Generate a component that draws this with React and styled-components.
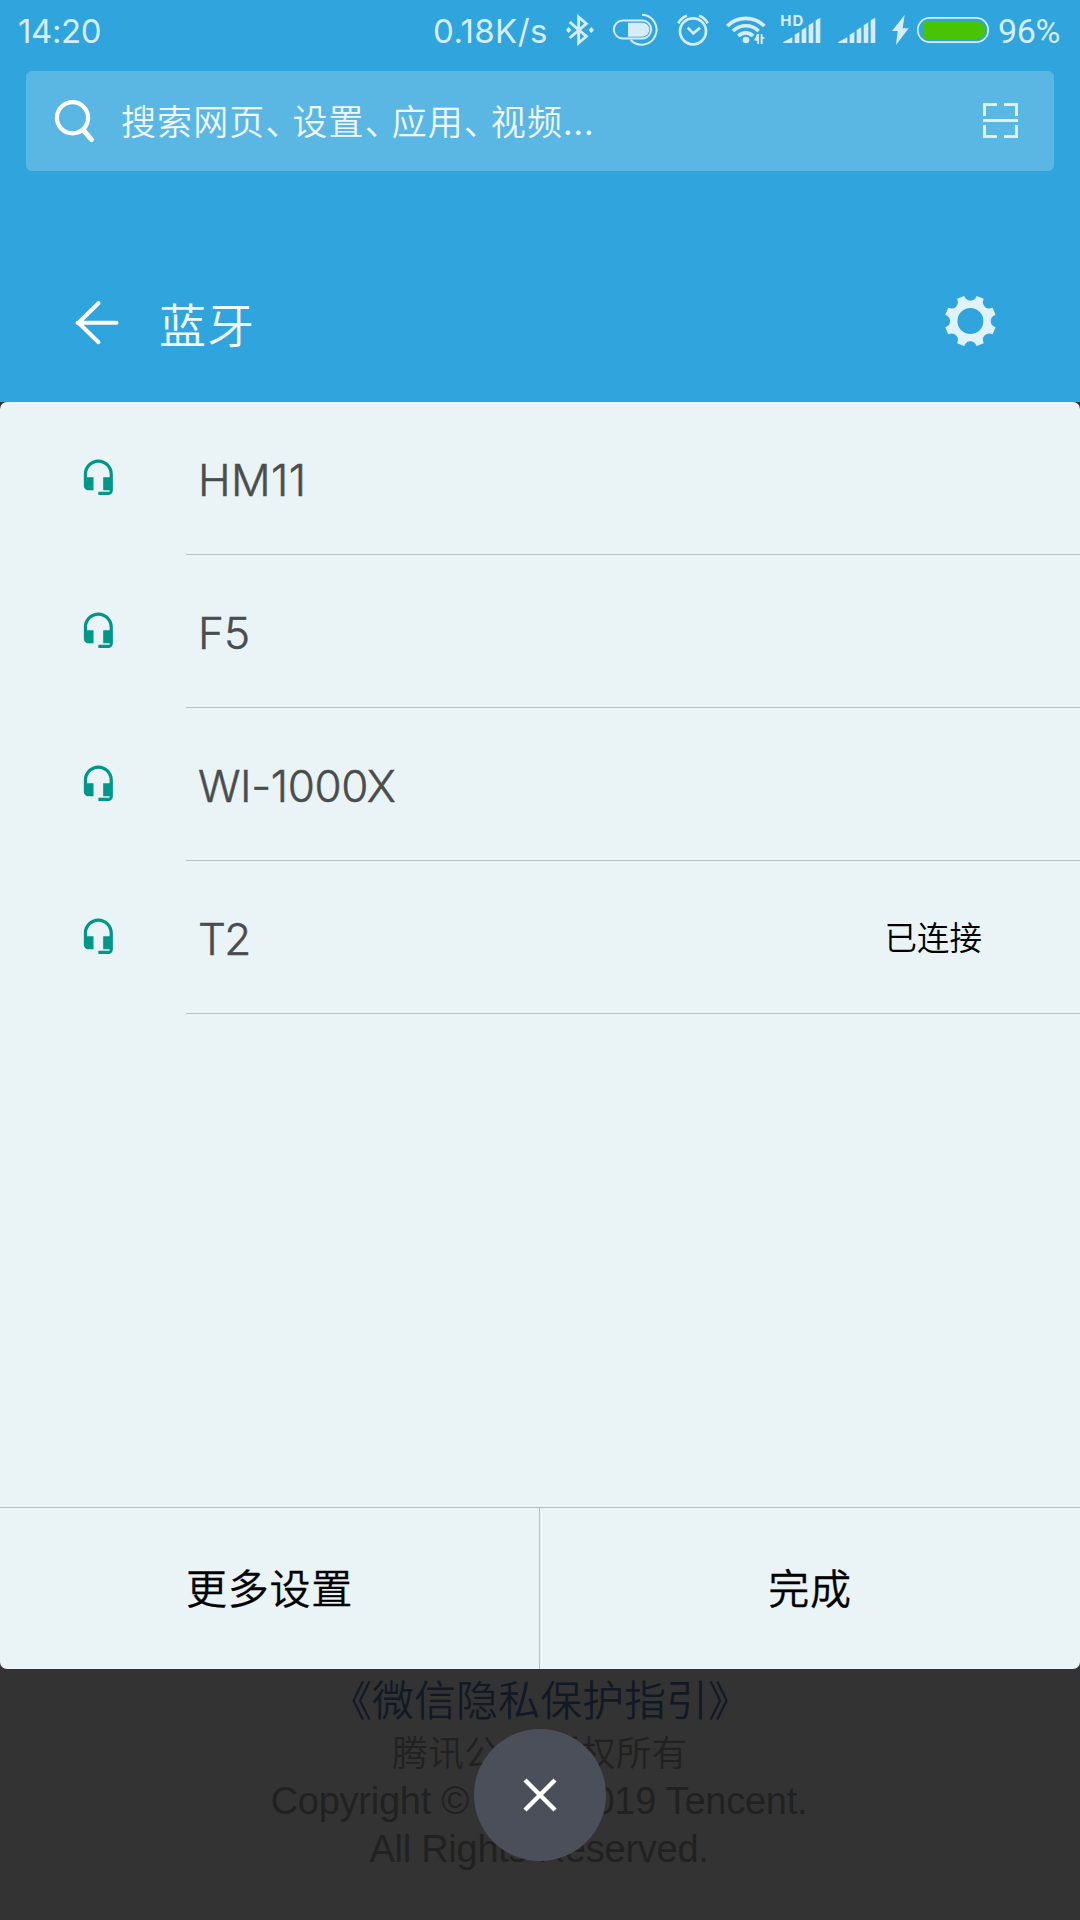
import React from "react";
import styled, { createGlobalStyle } from "styled-components";

const devices = [
  { name: "HM11", spacing: 0.4 },
  { name: "F5", spacing: 0.2 },
  { name: "WI-1000X", spacing: -0.4 },
  { name: "T2", spacing: -1.8, status: "已连接" },
];

// one notch + one tooth, repeated 8 times around the centre
const gearPath = () => {
  const notch = [[-6.3, -25.1], [-4.8, -22.4], [-3.2, -20.3], [0, -20.3], [3.2, -20.3], [4.8, -22.4], [6.3, -25.1]];
  let d = "";
  for (let i = 0; i < 8; i++) {
    const a = (i * Math.PI) / 4;
    const p = notch.map(([x, y]) =>
      `${(x * Math.cos(a) - y * Math.sin(a)).toFixed(2)} ${(x * Math.sin(a) + y * Math.cos(a)).toFixed(2)}`
    );
    d += `${i ? "L" : "M"}${p[0]}L${p[1]}Q${p[2]} ${p[3]}Q${p[4]} ${p[5]}L${p[6]}`;
  }
  return d + "ZM13 0A13 13 0 1 0 -13 0A13 13 0 1 0 13 0Z";
};

function StatusIcons() {
  return (
    <>
      <Icon $w={30} $h={34} $ml={16} viewBox="435 39 90 102">
        <path d="M449 66L499 109L476 129V51L499 71L449 114" fill="none" stroke="currentColor" strokeWidth="8.5" />
        <path d="M446 81l8 9-8 9-8-9zM514 81l8 9-8 9-8-9z" />
      </Icon>
      <Icon $w={47} $h={34} $ml={17} viewBox="576 37 141 102">
        <rect x="581.5" y="59.5" width="112" height="54" rx="27" fill="none" stroke="currentColor" strokeWidth="6" />
        <path d="M624 66h43a21 21 0 0 1 0 42h-43z" />
        <path d="M666 42a45 45 0 1 1-34 76" fill="none" stroke="currentColor" strokeWidth="6" />
      </Icon>
      <Icon $w={34} $h={34} $ml={17} viewBox="768 37 102 102">
        <g fill="none" stroke="currentColor" strokeWidth="8">
          <circle cx="819" cy="92" r="39" />
          <path d="M803 81l17 17 20-17" />
          <path d="M775 68q8-17 26-23M863 68q-8-17-26-23" />
        </g>
      </Icon>
      <Icon $w={42} $h={34} $ml={16} viewBox="-42 39 126 102">
        <g fill="none" stroke="currentColor" strokeWidth="11">
          <path d="M-38 78a79 79 0 0 1 111 0" />
          <path d="M-21 93a55 55 0 0 1 77 0" />
          <path d="M-5 108a31 31 0 0 1 44 0" />
        </g>
        <circle cx="18" cy="120" r="10" />
        <path d="M51 102h6v30h-5v-9l-10-2zM62 102h5l1 9 9 3-9 3v15h-6z" />
      </Icon>
      <Icon $w={42} $h={42} $ml={12} viewBox="119 27 126 126">
        <text x="120" y="77" fontFamily="Inter, sans-serif" fontSize="45" fontWeight="700" textLength="69">HD</text>
        <path d="M129 129v-3l27-14v17zM163 129v-25l14-8v33zM184 129V90l14-8v47zM205 129V76l14-9v62zM226 129V61l14-8v76z" />
      </Icon>
      <Icon $w={38} $h={34} $ml={16} viewBox="293 39 114 102">
        <path d="M294 129v-3l27-14v17zM328 129v-25l14-8v33zM349 129V90l14-8v47zM370 129V76l14-9v62zM391 129V61l14-8v76z" />
      </Icon>
      <Icon $w={17} $h={34} $ml={16} viewBox="458 39 51 102">
        <path d="M496 45l-38 48h17l-5 42 38-50h-18z" />
      </Icon>
      <Icon $w={72} $h={34} $ml={8} viewBox="531 39 216 102">
        <rect x="533.5" y="53.5" width="211" height="73" rx="36" fill="none" stroke="currentColor" strokeWidth="5" />
        <path d="M549 63h160a27 27 0 0 1 0 55H561q-12 0-12-12z" fill="#48c400" />
      </Icon>
    </>
  );
}

function App() {
  return (
    <>
      <GlobalStyle />
      <Screen>
        <Header>
          <StatusBar>
            <Clock>14:20</Clock>
            <Speed>0.18K/s</Speed>
            <StatusIcons />
            <Percent>96%</Percent>
          </StatusBar>

          <SearchBox>
            <Icon $w={42} $h={46} viewBox="0 0 42 46">
              <g fill="none" stroke="#fff" strokeLinecap="round">
                <circle cx="19.5" cy="19.7" r="15.6" strokeWidth="4.2" />
                <path d="M30 31.7l8.5 10" strokeWidth="5" />
              </g>
            </Icon>
            <Placeholder>
              搜索网页<Comma>、</Comma>设置<Comma>、</Comma>应用<Comma>、</Comma>视频...
            </Placeholder>
            <Icon $w={35} $h={36} viewBox="0 0 35 36">
              <path
                d="M1.5 13V1.5H14M21 1.5H33.5V13M0 17.5H35M1.5 22V33.5H14M21 33.5H33.5V22"
                fill="none" stroke="#dff1fb" strokeWidth="3"
              />
            </Icon>
          </SearchBox>

          <TitleBar>
            <Icon $w={46} $h={50} viewBox="0.5 -0.7 46 50">
              <path
                d="M43 25H4M25 5.5L5 25L25 44.5"
                fill="none" stroke="#fff" strokeWidth="4" strokeLinecap="round" strokeLinejoin="round"
              />
            </Icon>
            <Title>蓝牙</Title>
            <Icon $w={54} $h={54} viewBox="-27.4 -26 54 54">
              <path d={gearPath()} fill="#e0f2fb" fillRule="evenodd" />
            </Icon>
          </TitleBar>
        </Header>

        <Sheet>
          <List>
            {devices.map((device) => (
              <Row key={device.name}>
                <Headset viewBox="0 0 24 24">
                  <path d="M12 1c-4.97 0-9 4.03-9 9v7c0 1.66 1.34 3 3 3h3v-8H5v-2c0-3.87 3.13-7 7-7s7 3.13 7 7v2h-4v8h4v1h-7v2h6c1.66 0 3-1.34 3-3V10c0-4.97-4.03-9-9-9z" />
                </Headset>
                <RowBody>
                  <Name $spacing={device.spacing}>{device.name}</Name>
                  {device.status && <Status>{device.status}</Status>}
                </RowBody>
              </Row>
            ))}
          </List>
          <Footer>
            <Button>更多设置</Button>
            <Button>完成</Button>
          </Footer>
        </Sheet>

        <Backdrop>
          <Policy>《微信隐私保护指引》</Policy>
          <Rights>腾讯公司 版权所有</Rights>
          <Copyright>Copyright © 2011-2019 Tencent.</Copyright>
          <Copyright>All Rights Reserved.</Copyright>
          <Close>
            <Icon $w={34} $h={34} viewBox="0 0 34 34">
              <path d="M2 2L32 32M32 2L2 32" stroke="#fff" strokeWidth="4.4" />
            </Icon>
          </Close>
        </Backdrop>
      </Screen>
    </>
  );
}

const GlobalStyle = createGlobalStyle`
  body {
    margin: 0;
    background-color: #333;
    font-family: "Noto Sans CJK SC", sans-serif;
  }
  * {
    box-sizing: border-box;
  }
`;
const Screen = styled.div`
  display: flex;
  flex-direction: column;
  width: 1080px;
  height: 1920px;
  overflow: hidden;
  background-color: #333;
`;
const Header = styled.header`
  height: 402px;
  background-color: #30a4dc;
`;
const Icon = styled.svg`
  flex: none;
  width: ${(props) => props.$w}px;
  height: ${(props) => props.$h}px;
  margin-left: ${(props) => props.$ml || 0}px;
  fill: currentColor;
  overflow: visible;
`;
const StatusBar = styled.div`
  display: flex;
  align-items: center;
  height: 60px;
  padding: 0 20px 0 18px;
  color: #d6edf9;
  font-family: Inter, sans-serif;
  font-size: 33px;
  white-space: nowrap;
`;
const Clock = styled.span`
  flex: 1;
  padding-top: 2px;
  letter-spacing: -0.4px;
`;
const Speed = styled.span`
  width: 116px;
  padding-top: 2px;
  letter-spacing: 0.4px;
`;
const Percent = styled.span`
  width: 62px;
  margin-left: 9px;
  padding-top: 2px;
  font-family: Roboto, sans-serif;
  font-size: 34px;
  letter-spacing: -0.3px;
`;
const SearchBox = styled.div`
  display: flex;
  align-items: center;
  height: 100px;
  margin: 11px 26px 0;
  padding: 0 36px 0 27px;
  border-radius: 6px;
  background-color: #5ab7e4;
`;
const Placeholder = styled.span`
  flex: 1;
  margin-left: 26px;
  padding-bottom: 3px;
  color: #f0f8fd;
  font-size: 35px;
  font-weight: 350;
  letter-spacing: 1.1px;
`;
const Comma = styled.span`
  letter-spacing: -8px;
`;
const TitleBar = styled.div`
  display: flex;
  align-items: center;
  height: 100px;
  margin-top: 101px;
  padding: 0 83px 0 74px;
`;
const Title = styled.h1`
  flex: 1;
  margin: 0 0 0 39px;
  color: #f0f9fd;
  font-size: 47px;
  font-weight: 350;
  letter-spacing: 1px;
`;
const Sheet = styled.main`
  display: flex;
  flex-direction: column;
  height: 1267px;
  border-radius: 7px;
  background-color: #eaf3f5;
  overflow: hidden;
`;
const List = styled.div`
  flex: 1;
`;
const Row = styled.div`
  display: flex;
  align-items: center;
  height: 153px;
  padding-left: 79px;
`;
const Headset = styled.svg`
  width: 38.7px;
  height: 38.7px;
  margin-right: 68.3px;
  margin-bottom: 1.5px;
  fill: #009688;
`;
const RowBody = styled.div`
  flex: 1;
  display: flex;
  align-items: center;
  justify-content: space-between;
  height: 100%;
  padding: 4px 98px 0 12px;
  border-bottom: 1px solid #b3bfc2;
`;
const Name = styled.span`
  color: #4a4d4e;
  font-family: Inter, sans-serif;
  font-size: 44px;
  font-weight: 300;
  letter-spacing: ${(props) => props.$spacing}px;
  -webkit-text-stroke: 0.5px #4a4d4e;
`;
const Status = styled.span`
  padding-bottom: 8px;
  color: #000;
  font-size: 32.5px;
  font-weight: 350;
`;
const Footer = styled.div`
  display: flex;
  height: 162px;
  border-top: 1px solid #b3bfc2;
`;
const Button = styled.button`
  width: 50%;
  padding: 0 0 6px;
  border: 0;
  color: #000;
  background: none;
  font-family: inherit;
  font-size: 41px;
  font-weight: 350;
  letter-spacing: 0.8px;
  -webkit-text-stroke: 0.3px #000;

  &:first-child {
    border-right: 1px solid #b3bfc2;
  }
`;
const Backdrop = styled.div`
  position: relative;
  flex: 1;
  text-align: center;
  color: #212121;
  white-space: nowrap;
`;
const Policy = styled.div`
  height: 58px;
  line-height: 57px;
  color: #131924;
  font-size: 42px;
  font-weight: 350;
`;
const Rights = styled.div`
  height: 50px;
  line-height: 47px;
  font-size: 35.5px;
  font-weight: 350;
  letter-spacing: 0.4px;
`;
const Copyright = styled.div`
  height: 48px;
  padding-right: 2px;
  line-height: 49px;
  font-family: "Liberation Sans", Arial, sans-serif;
  font-size: 38px;
  letter-spacing: -0.25px;
`;
const Close = styled.div`
  position: absolute;
  top: 60px;
  left: 474px;
  display: flex;
  align-items: center;
  justify-content: center;
  width: 132px;
  height: 132px;
  border-radius: 50%;
  background-color: #4b4f59;
`;
export default App;
